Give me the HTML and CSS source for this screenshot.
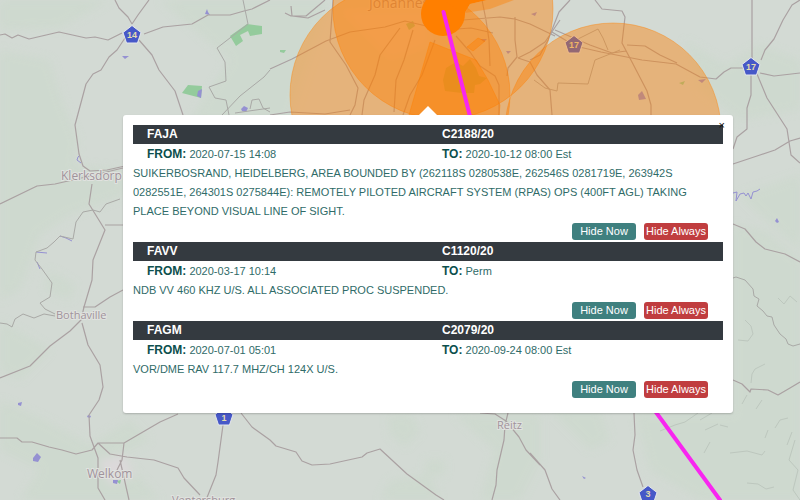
FILE: index.html
```html
<!DOCTYPE html>
<html lang="en">
<head>
<meta charset="utf-8">
<title>NOTAM map</title>
<link rel="stylesheet" href="styles.css">
</head>
<body>
<main class="map">
  <svg class="map-canvas" viewBox="0 0 800 500" preserveAspectRatio="xMidYMin slice" role="img" aria-label="Map">
    <defs>
      <filter id="soft"><feGaussianBlur stdDeviation="4"/></filter>
      <path id="shield" d="M0-9.500 9-2.500 5.500 8H-5.500L-9-2.500Z"/>
    </defs>
    <rect width="800" height="500" class="land"/>
    <g class="veld" filter="url(#soft)">
      <path d="M0 50 50 60 62 100 78 140 75 165 125 170V195L70 215 40 235 20 290 0 300Z"/>
      <path d="M0 0H110L60 28 0 30ZM160 0H330L290 120H190L230 60Z"/>
      <path d="M50 270 75 285 70 300 45 290ZM0 320 50 350 20 380 0 370Z"/>
      <path d="M0 400 45 420 90 445 130 420 150 440 120 455 160 500H20L40 470 0 450Z"/>
      <path d="M388 415H412L420 432 405 447 390 435ZM425 460H445V475H425ZM390 480 430 475 440 500H380ZM455 415H540V460L520 500H480L495 450Z"/>
      <path d="M550 410H600L610 440 590 450ZM635 413H800V500H700L650 470ZM733 225 765 230 800 260V413H733Z"/>
      <path d="M685 40 725 65 760 45 800 60V110L740 120 700 90ZM740 195 800 175V250L760 215Z"/>
    </g>
    <g class="urban" filter="url(#soft)">
      <path d="M98 460 125 455 135 475 110 485ZM340 10H430V45L390 60Z"/>
    </g>
    <g class="relief">
      <path d="M751 383 752 374 755 369 765 364M745 320 751 326 753 334 748 341 738 340M778 298 784 304 790 296 797 302M730 453 747 451 762 455 765 451M747 483 758 484 766 489 774 487M765 438 768 430M775 428 780 420 788 418M787 445 792 432M747 395 742 404M756 409 762 400M700 420 712 413M795 440 789 460 798 470 793 490 800 500"/>
      <path d="M660 431 675 425 685 422 698 413M705 430 718 424M720 425 728 427M704 453 710 442"/>
    </g>
    <g class="parks">
      <path d="M230 36 247 24 262 26 262 34 250 36 248 31 240 35 243 41 236 46ZM188 85 202 86 201 98 182 93ZM280 50 286 50 284 53 280 52ZM116 481 121 480 120 484ZM406 24 413 21 415 26 409 30ZM446 68 456 62 463 66 470 59 476 68 479 76 487 78 480 84 475 85 474 93 462 93 445 91 443 80ZM679 83 685 81 683 85Z"/>
    </g>
    <g class="water">
      <path d="M205 14 207 9 208 12 210 15ZM122 56 129 56 125 59ZM198 91 202 89 201 98 197 96ZM241 109 244 106 248 108 246 112 242 111ZM18 403 22 402 21 406 18 405ZM33 458 37 453 41 457 38 462 33 461ZM88 415 91 416 90 418 87 417ZM113 480 118 480 117 484 113 483ZM777 218 779 222 777 223 775 221ZM582 476 586 478 584 479ZM480 39 487 39 484 42ZM638 95 642 91 646 99 639 100ZM698 80 706 79 702 83ZM531 14 537 12 535 16ZM506 51 511 51 508 54Z"/>
      <path class="stream" d="M81 163 77 160 78 157 80 155M733 193 737 192 736 201 740 194 744 193 746 196 748 193 751 199 753 192 757 191 760 189M60 236 66 238 72 241M36 252 47 253M37 262 40 269"/>
    </g>
    <g class="roads">
      <path d="M0 35 5 34 12 38 18 35 29 39 59 32 86 38 95 37 108 40 122 33M144 34 163 27 192 24 208 15H230L244 11 252 9 270 0M115 0 119 8 128 17 132 24M149 0 138 15 132 24M125 38 117 50 109 57 101 70 93 74 86 84 75 125 79 154 83 166 90 171 107 170 125 166M139 40 152 55 159 70 175 91 183 115"/>
      <path d="M0 204 37 186 55 184 90 176 123 168M92 184 89 204 105 230 93 260 92 280 84 307 81 320 70 331 50 346 30 366 0 378M83 307H95L110 297 123 290M105 225H123M82 323 88 345 100 365 103 387 99 400 89 415 90 436 98 458 98 488 105 500M0 438H17L22 442 32 442 49 447 62 450 76 454 92 450 98 443H124L160 422 178 414M98 443 110 454 127 457 154 460 178 468 184 478 200 495M124 443 122 460 117 470M120 460 129 500M223 425 218 462 216 475 206 500M241 413 252 427 270 440 276 446 296 452 302 461 312 465 330 464 362 457 367 453 380 449 407 474 436 495 444 500"/>
      <path d="M480 413 495 414 506 421 519 437 526 450 540 465M508 413 505 425 504 440 497 470 496 485 492 500M530 453 545 470 552 489 560 500M634 413 635 435 633 450 637 470 643 487"/>
      <path d="M752 0V60M800 0 792 5 783 20 774 39 765 50 761 60M744 68H731L724 72 716 79 700 77 676 64 642 60 601 52 575 46 552 32M760 73 774 76 800 73M751 74 751 95 747 108V129L737 137 733 149M757 74 767 98 787 129 791 155 800 163M733 164 760 155 775 150 790 141 800 138M733 224 745 229 756 242 765 249 785 254 800 262M733 380 742 384 750 392 751 389 768 390 778 395 790 388 800 382"/>
      <path d="M595 0 602 9 622 11 625 17 622 43 633 64 647 91 651 105V115M570 0 559 12 548 40 540 55 530 60M555 30 590 45 612 53 626 51M627 45 645 46 660 55 677 63"/>
      <path d="M270 69 292 59 326 41 350 32 385 27 405 21 443 30 471 28 493 33M333 0 330 42 346 65 358 88 355 105 350 115M400 28 380 55 375 75 364 100 362 115M413 30 404 60 396 80 394 112M435 40 422 75 410 95 403 115M482 0 486 20 489 40 490 66M463 20 500 17 515 19 530 24 555 36M456 36 470 52 480 66 495 76 499 85V115M515 17 515 40 517 57 508 68 507 76M560 20 545 42 530 52 518 58M518 58 530 62 537 75 550 90 552 115M285 13 291 16H306L325 0M291 6 292 16 308 18 325 10M270 115 290 112 325 114 350 110"/>
    </g>
    <g class="tracks">
      <path d="M93 210 83 212 76 222 73 239 60 236 54 242 47 248 36 252 35 260 42 269 52 283 50 297 40 303 45 309 55 314M0 323 7 324 12 327 15 319 23 314 34 318 44 314 55 316M93 210 100 212 106 204 120 199M243 0 248 24 217 48 225 62 226 81 209 87 215 98 226 100 229 115M222 115 240 96 264 77 270 70M250 109 252 100 259 99 263 108 270 112M235 113 270 108M733 278 736 277 745 280 753 289 754 296 759 299 757 306 763 311 767 316 772 317 774 325 780 334 786 339 788 344 793 346 800 344M534 80 545 88 557 91 558 83 588 84 595 60 620 50M576 40 598 29 603 38 608 50"/>
    </g>
    <g class="labels">
      <text x="61" y="180" font-size="12">Klerksdorp</text>
      <text x="56" y="319" font-size="11">Bothaville</text>
      <text x="87" y="478" font-size="12">Welkom</text>
      <text x="497" y="429" font-size="11">Reitz</text>
      <text x="172" y="504" font-size="11">Ventersburg</text>
      <text x="369" y="8" font-size="14">Johannesburg</text>
    </g>
    <g class="shields">
      <use href="#shield" x="132" y="35"/><text x="132" y="38">14</text>
      <use href="#shield" x="574" y="45"/><text x="574" y="48">17</text>
      <use href="#shield" x="751" y="67"/><text x="751" y="70">17</text>
      <use href="#shield" x="224" y="417"/><text x="224" y="421">1</text>
      <use href="#shield" x="648" y="495"/><text x="648" y="497">3</text>
    </g>
    <g class="zones">
      <circle cx="400" cy="95" r="110"/>
      <circle cx="443" cy="9" r="110"/>
      <circle cx="613" cy="131" r="108"/>
      <path d="M430 42 476 60 488 80 500 105 496 150H400L409 115Z"/>
      <path d="M467 47 478 38 485 41 473 51Z"/>
    </g>
    <g class="core">
      <circle cx="443" cy="14" r="22"/>
      <path d="M443 0H487L470 4 464 14Z"/>
    </g>
    <path class="glow" d="M465 13 490 9 514 0H487L470 4Z"/>
    <path class="route" d="M443.500 12 493 207 650 404 720 500"/>
  </svg>

  <section class="popup" aria-label="NOTAMs">
    <button class="popup-close" type="button" aria-label="Close">×</button>
    <article class="notam">
      <header class="notam-head row"><span>FAJA</span><span>C2188/20</span></header>
      <div class="notam-dates row">
        <span><b>FROM:</b> 2020-07-15 14:08</span><span><b>TO:</b> 2020-10-12 08:00 Est</span>
      </div>
      <p class="notam-text">SUIKERBOSRAND, HEIDELBERG, AREA BOUNDED BY (262118S 0280538E, 262546S 0281719E, 263942S 0282551E, 264301S 0275844E): REMOTELY PILOTED AIRCRAFT SYSTEM (RPAS) OPS (400FT AGL) TAKING PLACE BEYOND VISUAL LINE OF SIGHT.</p>
      <div class="notam-actions">
        <button class="btn" type="button">Hide Now</button>
        <button class="btn btn-danger" type="button">Hide Always</button>
      </div>
    </article>
    <article class="notam">
      <header class="notam-head row"><span>FAVV</span><span>C1120/20</span></header>
      <div class="notam-dates row">
        <span><b>FROM:</b> 2020-03-17 10:14</span><span><b>TO:</b> Perm</span>
      </div>
      <p class="notam-text">NDB VV 460 KHZ U/S. ALL ASSOCIATED PROC SUSPENDED.</p>
      <div class="notam-actions">
        <button class="btn" type="button">Hide Now</button>
        <button class="btn btn-danger" type="button">Hide Always</button>
      </div>
    </article>
    <article class="notam">
      <header class="notam-head row"><span>FAGM</span><span>C2079/20</span></header>
      <div class="notam-dates row">
        <span><b>FROM:</b> 2020-07-01 05:01</span><span><b>TO:</b> 2020-09-24 08:00 Est</span>
      </div>
      <p class="notam-text">VOR/DME RAV 117.7 MHZ/CH 124X U/S.</p>
      <div class="notam-actions">
        <button class="btn" type="button">Hide Now</button>
        <button class="btn btn-danger" type="button">Hide Always</button>
      </div>
    </article>
  </section>
</main>
</body>
</html>
```
FILE: styles.css
```css
* { box-sizing: border-box; }

body {
  margin: 0;
  font-family: "Liberation Sans", Arial, sans-serif;
  font-size: 11px;
  line-height: 19px;
  color: #2f6b68;
}

.map {
  position: relative;
  min-height: 100vh;
  overflow: hidden;
  background: #d3dad4;
}

.map-canvas {
  position: absolute;
  inset: 0;
  width: 100%;
  height: 100%;
}

.land { fill: #d3dad4; }
.veld { fill: #cdd9ce; opacity: .8; }
.urban { fill: #dcd9da; }
.parks { fill: #94cb9c; }
.water { fill: #9591d2; }
.stream { fill: none; stroke: #9591d2; stroke-width: 1; }
.relief { fill: none; stroke: #bdc7be; stroke-width: 1; stroke-linejoin: round; }
.roads { fill: none; stroke: #aaa1a2; stroke-width: 1.2; stroke-linejoin: round; }
.tracks { fill: none; stroke: #a9a9a6; stroke-width: 1; }

.labels {
  font-family: "Open Sans", "Noto Sans", sans-serif;
  fill: #a0939b;
  stroke: #e0e2df;
  stroke-width: 2px;
  paint-order: stroke;
}

.shields use { fill: #4658c8; stroke: #e6e8ec; stroke-width: 1; }
.shields text {
  font-size: 9px;
  font-weight: bold;
  text-anchor: middle;
  fill: #e3dcae;
}

.zones { fill: #ff7f00; fill-opacity: .42; stroke: #ff7f00; stroke-opacity: .4; stroke-width: 1; }
.core { fill: #ff7f00; }
.glow { fill: #ff7f00; fill-opacity: .4; }
.route { fill: none; stroke: #f826f0; stroke-width: 4; stroke-linecap: round; }

.popup {
  position: absolute;
  top: 115px;
  left: 428px;
  width: min(610px, 100% - 32px);
  padding: 10px 10px 13px;
  transform: translateX(-50%);
  background: #fff;
  border-radius: 3px;
  box-shadow: 0 1px 2px rgba(0, 0, 0, .2);
}

.popup::before {
  content: "";
  position: absolute;
  top: -9px;
  left: 50%;
  margin-left: -10px;
  border: 10px solid transparent;
  border-top: 0;
  border-bottom-color: #fff;
}

.popup-close {
  position: absolute;
  top: 4px;
  right: 8px;
  padding: 0;
  border: 0;
  background: none;
  color: #111;
  font: 11px/12px "Liberation Sans", Arial, sans-serif;
}

.row {
  display: grid;
  grid-template-columns: 1fr 1fr;
}

.row > span { padding-left: 14px; }

.notam-head {
  font-size: 12px;
  background: #343a40;
  color: #fff;
  font-weight: bold;
}

.notam-dates { padding-top: 1px; }

.notam-dates b {
  font-size: 12px;
  color: #0d4f4d;
}

.notam-text {
  margin: 0;
  padding-right: 15px;
}

.notam-actions {
  display: flex;
  justify-content: flex-end;
  gap: 8px;
  padding: 2px 15px 2px 0;
}

.btn {
  width: 64px;
  height: 17px;
  padding: 0;
  border: 0;
  border-radius: 3px;
  background: #3f807f;
  color: #fff;
  font: 11px/17px "Liberation Sans", Arial, sans-serif;
  white-space: nowrap;
}

.btn-danger { background: #c03d3f; }
```
